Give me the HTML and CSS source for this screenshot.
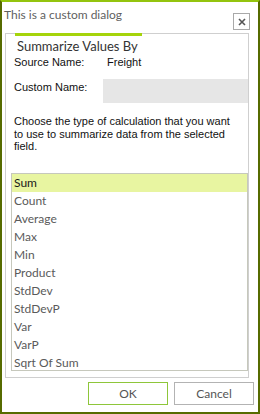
FILE: index.html
```html
<!DOCTYPE html>
<html lang="en">

<head>
    <meta charset="utf-8">
    <meta name="viewport" content="width=device-width, initial-scale=1.0">
    <title>Summarize Values By</title>
    <link rel="stylesheet" href="styles.css">
</head>

<body>
    <div class="dialog">
        <div class="titlebar">
            <span class="title">This is a custom dialog</span>
            <button class="close" aria-label="Close">
                <svg width="8" height="8" viewBox="0 0 8 8">
                    <path d="M1 1 L7 7 M7 1 L1 7" stroke="#555" stroke-width="1.6" fill="none" />
                </svg>
            </button>
        </div>

        <div class="group">
            <div class="group-title">Summarize Values By</div>
            <div class="row source">
                <span class="label">Source Name:</span>
                <span class="value">Freight</span>
            </div>
            <div class="row custom">
                <span class="label">Custom Name:</span>
                <div class="input"></div>
            </div>
            <p class="hint">Choose the type of calculation that you want to use to summarize data from the selected field.</p>
            <ul class="list">
                <li class="selected">Sum</li>
                <li>Count</li>
                <li>Average</li>
                <li>Max</li>
                <li>Min</li>
                <li>Product</li>
                <li>StdDev</li>
                <li>StdDevP</li>
                <li>Var</li>
                <li>VarP</li>
                <li>Sqrt Of Sum</li>
            </ul>
        </div>

        <div class="buttons">
            <button class="btn ok">OK</button>
            <button class="btn">Cancel</button>
        </div>
    </div>
</body>

</html>
```

FILE: styles.css
```css
* {
    margin: 0;
    padding: 0;
    box-sizing: border-box;
}

body {
    background: #fff;
    font-family: Lato, "Noto Sans", sans-serif;
}

.dialog {
    width: 260px;
    height: 414px;
    border: 2px solid #566b00;
    border-top-color: #94c40e;
    background: #fff;
}

.titlebar {
    display: flex;
    justify-content: space-between;
    align-items: flex-start;
    height: 31px;
}

.title {
    font-size: 12px;
    line-height: 16px;
    color: #5f5f5f;
    padding: 5px 0 0 2px;
}

.close {
    width: 17px;
    height: 17px;
    margin: 11px 8px 0 0;
    border: 1px solid #a9a9a9;
    background: #fff;
    display: flex;
    justify-content: center;
    align-items: center;
}

.group {
    height: 345px;
    margin: 0 9px 0 3px;
    border: 1px solid #cfcfcf;
}

.group-title {
    width: 127px;
    margin: -1px 0 0 9px;
    padding: 2px 0 0 2px;
    border-top: 3px solid #a5d40b;
    font-size: 13px;
    line-height: 16px;
    color: #333;
}

.row {
    display: flex;
    align-items: flex-start;
    padding-left: 8px;
    font-family: "Liberation Sans", Arial, sans-serif;
    font-size: 11px;
    line-height: 16px;
    color: #111;
}

.row .label {
    width: 93px;
}

.custom {
    margin-top: 9px;
}

.custom .label {
    width: 89px;
}

.input {
    flex: 1;
    height: 24px;
    background: #e6e6e6;
}

.hint {
    margin-top: 12px;
    padding: 0 8px;
    font-family: "Liberation Sans", Arial, sans-serif;
    font-size: 11px;
    line-height: 12.5px;
    color: #111;
}

.list {
    list-style: none;
    height: 198px;
    margin: 20px 0 0 5px;
    border: 1px solid #c6c8bc;
    overflow: hidden;
}

.list li {
    height: 18px;
    line-height: 18px;
    padding-left: 2px;
    font-size: 12px;
    color: #5a5a5a;
}

.list li.selected {
    background: #e8f5a1;
    color: #1a1a1a;
}

.buttons {
    display: flex;
    justify-content: flex-end;
    gap: 6px;
    margin: 4px 4px 0 0;
}

.btn {
    width: 80px;
    height: 23px;
    border: 1px solid #b3b3b3;
    background: #fff;
    font-family: Lato, "Noto Sans", sans-serif;
    font-size: 12px;
    color: #555;
}

.btn.ok {
    border-color: #8ec63a;
}
```
